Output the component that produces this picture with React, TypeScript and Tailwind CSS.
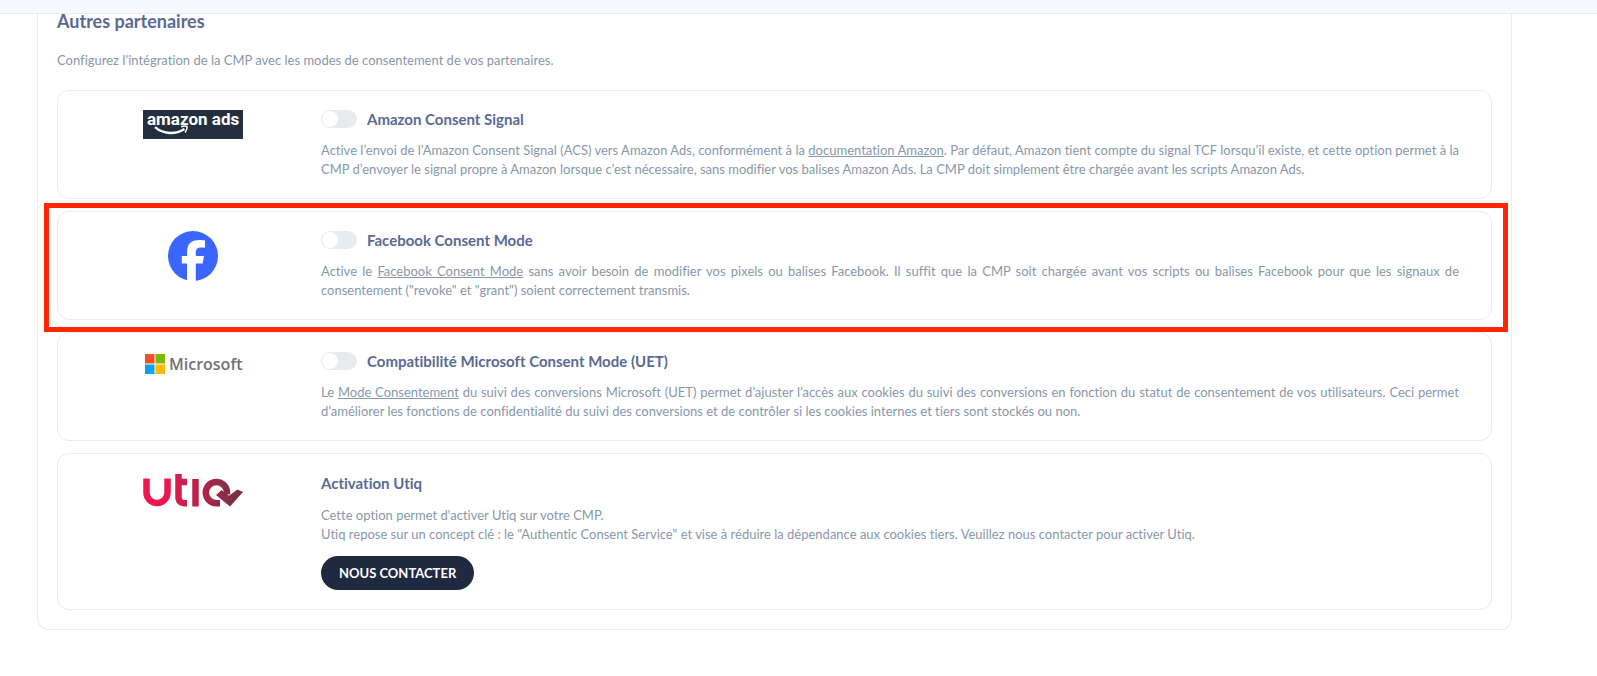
import type { ReactNode } from "react";

function AmazonAdsLogo() {
  return (
    <svg className="w-[100px] h-[29px]" viewBox="0 0 100 29" role="img" aria-label="Amazon Ads">
      <rect width="100" height="29" fill="#232f3e" />
      <text x="4" y="15" fill="#fff" fontFamily="Roboto, sans-serif" fontSize="17" fontWeight="700">
        amazon ads
      </text>
      <path d="M12 17.200c8.500 7.300 20.500 7.600 29.500 1.800" fill="none" stroke="#fff" strokeWidth="2.400" />
      <path d="M38.200 16.800c2.500-1 4.500-1 5.800-.3.300 1.800-.4 4-1.800 6" fill="none" stroke="#fff" strokeWidth="1.600" />
    </svg>
  );
}

function FacebookLogo() {
  return (
    <svg className="w-[50px] h-[50px]" viewBox="0 0 50 50" role="img" aria-label="Facebook">
      <circle cx="25" cy="25" r="25" fill="#3866ff" />
      <path
        d="M19 50V32.500h-5.200V25H19v-3.500C19 13 23 9 31 9c2 0 4.500.2 6 .6v7.200c-1-.2-2.500-.2-3.700-.2-4 0-5.500 1.500-5.500 5.200V25h8.200l-1.400 7.500h-6.800V50z"
        fill="#fff"
      />
    </svg>
  );
}

function MicrosoftLogo() {
  return (
    <svg className="w-[100px] h-[25px]" viewBox="0 0 100 25" role="img" aria-label="Microsoft">
      <rect x="2" y="2" width="9.500" height="9.500" fill="#f25022" />
      <rect x="12.500" y="2" width="9.500" height="9.500" fill="#7fba00" />
      <rect x="2" y="12.500" width="9.500" height="9.500" fill="#00a4ef" />
      <rect x="12.500" y="12.500" width="9.500" height="9.500" fill="#ffb900" />
      <text x="26" y="18" fill="#737373" fontFamily="'Open Sans', sans-serif" fontSize="16" fontWeight="600">
        Microsoft
      </text>
    </svg>
  );
}

function UtiqLogo() {
  return (
    <svg className="w-[100px] h-[34px]" viewBox="0 0 100 34" role="img" aria-label="Utiq">
      <defs>
        <linearGradient id="utiq" gradientUnits="userSpaceOnUse" x1="0" y1="0" x2="100" y2="0">
          <stop offset="0.200" stopColor="#f0174f" />
          <stop offset="0.900" stopColor="#7d2f45" />
        </linearGradient>
      </defs>
      <g fill="none" stroke="url(#utiq)" strokeWidth="6.500">
        <path d="M3.500 5.500v14a10.500 10.500 0 0 0 21 0v-14" />
        <path d="M35.500 1v23c0 4 2 6.300 8.500 6.300M33 9h11" />
        <path d="M52.500 6v27.500" />
        <path d="M77 30.200h-3.600a10.600 10.600 0 1 1 10.600-10.600v2" />
      </g>
      <path d="M73 22l5.500-5 7.500 5.800L94.500 16.500l5.500 2.500-13 14.500z" fill="url(#utiq)" />
    </svg>
  );
}

interface DocLinkProps {
  children: ReactNode;
}

function DocLink({ children }: DocLinkProps) {
  return (
    <a href="#" className="underline">
      {children}
    </a>
  );
}

interface PartnerCardProps {
  logo: ReactNode;
  title: string;
  switchId?: string;
  highlighted?: boolean;
  children: ReactNode;
}

function PartnerCard({ logo, title, switchId, highlighted = false, children }: PartnerCardProps) {
  return (
    <section className="relative flex rounded-xl border border-[#e9ebee] pl-[7px] pr-8 py-[19px]">
      <div className="w-64 shrink-0 flex justify-center items-start">{logo}</div>
      <div className="flex-1 min-w-0">
        {switchId ? (
          <div className="flex items-center gap-[10px] h-[18px]">
            <input
              id={switchId}
              type="checkbox"
              role="switch"
              className="appearance-none w-9 h-[18px] shrink-0 rounded-full bg-[#e7ebee] before:block before:w-4 before:h-4 before:m-px before:rounded-full before:bg-white checked:bg-[#5a6a94] checked:before:translate-x-[18px]"
            />
            <label htmlFor={switchId} className="text-[15px] leading-[18px] font-bold text-[#5a6a94]">
              {title}
            </label>
          </div>
        ) : (
          <h3 className="text-[15px] leading-[20px] font-bold text-[#5a6a94]">{title}</h3>
        )}
        {children}
      </div>
      {highlighted && (
        <div
          className="absolute -left-[14px] -right-[17px] -top-[9px] -bottom-[13px] z-10 border-[5px] border-[#ff2600] pointer-events-none"
          aria-hidden
        />
      )}
    </section>
  );
}

export default function App() {
  return (
    <div className="min-h-screen bg-white font-['Lato',sans-serif] [font-variant-ligatures:none] text-[13px] leading-[19px] text-[#8898aa]">
      <header className="h-[14px] bg-[#f8f9fe] border-b border-[#e7ebee]" />
      <main className="ml-[37px] mr-[85px] px-[19px] pb-[19px] border border-t-0 border-[#e9ebee] rounded-b-xl">
        <h2 className="text-[18px] leading-[14px] font-bold text-[#5a6a94]">Autres partenaires</h2>
        <p className="mt-[23px] mb-5">
          Configurez l’intégration de la CMP avec les modes de consentement de vos partenaires.
        </p>

        <div className="flex flex-col gap-3">
          <PartnerCard logo={<AmazonAdsLogo />} title="Amazon Consent Signal" switchId="amazon">
            <p className="mt-[13px] text-justify">
              Active l’envoi de l’Amazon Consent Signal (ACS) vers Amazon Ads, conformément à la{" "}
              <DocLink>documentation Amazon</DocLink>. Par défaut, Amazon tient compte du signal TCF lorsqu’il existe,
              et cette option permet à la CMP d’envoyer le signal propre à Amazon lorsque c’est nécessaire, sans
              modifier vos balises Amazon Ads. La CMP doit simplement être chargée avant les scripts Amazon Ads.
            </p>
          </PartnerCard>

          <PartnerCard logo={<FacebookLogo />} title="Facebook Consent Mode" switchId="facebook" highlighted>
            <p className="mt-[13px] text-justify">
              Active le <DocLink>Facebook Consent Mode</DocLink> sans avoir besoin de modifier vos pixels ou balises
              Facebook. Il suffit que la CMP soit chargée avant vos scripts ou balises Facebook pour que les signaux de
              consentement ("revoke" et "grant") soient correctement transmis.
            </p>
          </PartnerCard>

          <PartnerCard logo={<MicrosoftLogo />} title="Compatibilité Microsoft Consent Mode (UET)" switchId="microsoft">
            <p className="mt-[13px] text-justify">
              Le <DocLink>Mode Consentement</DocLink> du suivi des conversions Microsoft (UET) permet d’ajuster l’accès
              aux cookies du suivi des conversions en fonction du statut de consentement de vos utilisateurs. Ceci
              permet d’améliorer les fonctions de confidentialité du suivi des conversions et de contrôler si les
              cookies internes et tiers sont stockés ou non.
            </p>
          </PartnerCard>

          <PartnerCard logo={<UtiqLogo />} title="Activation Utiq">
            <p className="mt-[13px]">
              Cette option permet d'activer Utiq sur votre CMP.
              <br />
              Utiq repose sur un concept clé : le "Authentic Consent Service" et vise à réduire la dépendance aux
              cookies tiers. Veuillez nous contacter pour activer Utiq.
            </p>
            <button
              type="button"
              className="mt-3 h-[34px] px-[18px] rounded-full bg-[#1f2940] text-white text-[13px] font-bold"
            >
              NOUS CONTACTER
            </button>
          </PartnerCard>
        </div>
      </main>
    </div>
  );
}
